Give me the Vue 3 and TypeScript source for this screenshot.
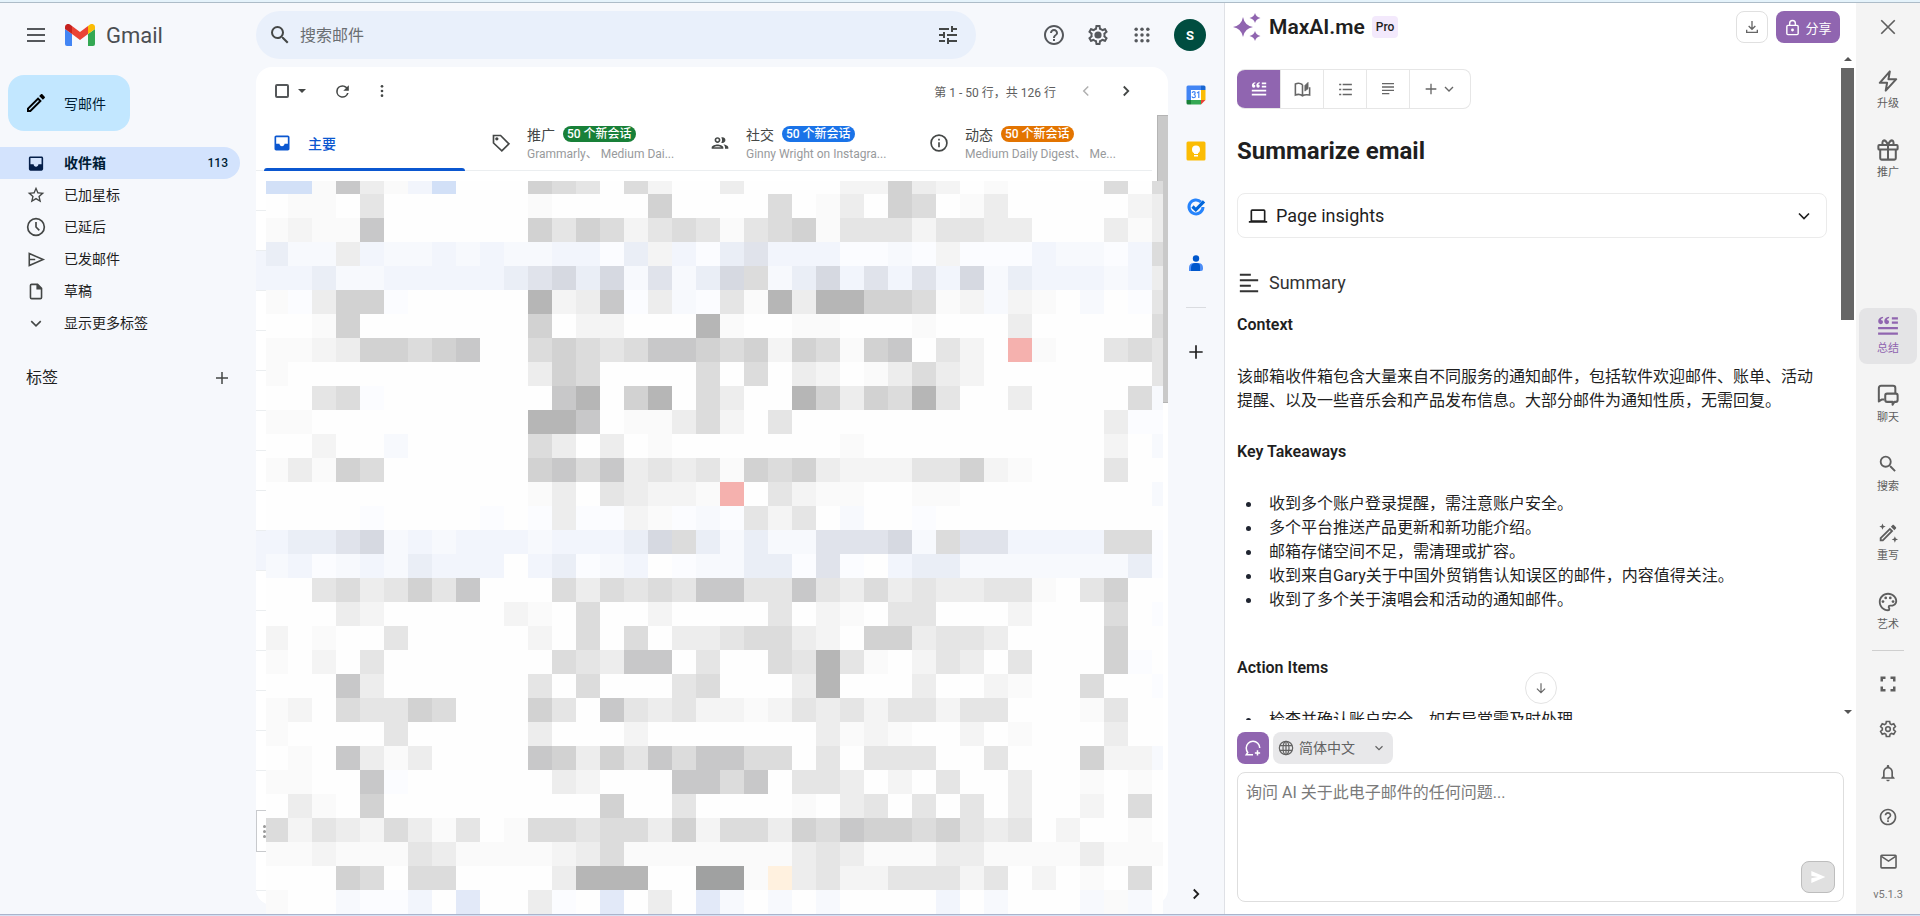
<script setup lang="ts">
import { h, ref } from 'vue'

interface Glyph {
  box?: string
  line?: number
  body: string
}

const glyphs: Record<string, Glyph> = {
  menu: { body: '<path d="M3 5h18v2H3zM3 11h18v2H3zM3 17h18v2H3z"/>' },
  search: { body: '<path d="M15.5 14h-.79l-.28-.27A6.471 6.471 0 0 0 16 9.5 6.5 6.5 0 1 0 9.5 16c1.61 0 3.09-.59 4.23-1.57l.27.28v.79l5 4.99L20.49 19l-4.99-5zm-6 0C7.01 14 5 11.99 5 9.5S7.01 5 9.5 5 14 7.01 14 9.5 11.99 14 9.5 14z"/>' },
  tune: { body: '<path d="M3 17v2h6v-2H3zM3 5v2h10V5H3zm10 16v-2h8v-2h-8v-2h-2v6h2zM7 9v2H3v2h4v2h2V9H7zm14 4v-2H11v2h10zm-6-4h2V7h4V5h-4V3h-2v6z"/>' },
  help: { body: '<path d="M11 18h2v-2h-2v2zm1-16C6.48 2 2 6.48 2 12s4.48 10 10 10 10-4.48 10-10S17.52 2 12 2zm0 18c-4.41 0-8-3.59-8-8s3.59-8 8-8 8 3.59 8 8-3.59 8-8 8zm0-14c-2.21 0-4 1.79-4 4h2c0-1.1.9-2 2-2s2 .9 2 2c0 2-3 1.75-3 5h2c0-2.25 3-2.5 3-5 0-2.21-1.79-4-4-4z"/>' },
  gear: { body: '<path d="M19.43 12.98c.04-.32.07-.64.07-.98 0-.34-.03-.66-.07-.98l2.11-1.65c.19-.15.24-.42.12-.64l-2-3.46c-.09-.16-.26-.25-.44-.25-.06 0-.12.01-.17.03l-2.49 1c-.52-.4-1.08-.73-1.69-.98l-.38-2.65C14.46 2.18 14.25 2 14 2h-4c-.25 0-.46.18-.49.42l-.38 2.65c-.61.25-1.17.59-1.69.98l-2.49-1c-.06-.02-.12-.03-.18-.03-.17 0-.34.09-.43.25l-2 3.46c-.13.22-.07.49.12.64l2.11 1.65c-.04.32-.07.65-.07.98 0 .33.03.66.07.98l-2.11 1.65c-.19.15-.24.42-.12.64l2 3.46c.09.16.26.25.44.25.06 0 .12-.01.17-.03l2.49-1c.52.4 1.08.73 1.69.98l.38 2.65c.03.24.24.42.49.42h4c.25 0 .46-.18.49-.42l.38-2.65c.61-.25 1.17-.59 1.69-.98l2.49 1c.06.02.12.03.18.03.17 0 .34-.09.43-.25l2-3.46c.12-.22.07-.49-.12-.64l-2.11-1.65zm-1.98-1.71c.04.31.05.52.05.73 0 .21-.02.43-.05.73l-.14 1.13.89.7 1.08.84-.7 1.21-1.27-.51-1.04-.42-.9.68c-.43.32-.84.56-1.25.73l-1.06.43-.16 1.13-.2 1.35h-1.4l-.19-1.35-.16-1.13-1.06-.43c-.43-.18-.83-.41-1.23-.71l-.91-.7-1.06.43-1.27.51-.7-1.21 1.08-.84.89-.7-.14-1.13c-.03-.31-.05-.54-.05-.74s.02-.43.05-.73l.14-1.13-.89-.7-1.08-.84.7-1.21 1.27.51 1.04.42.9-.68c.43-.32.84-.56 1.25-.73l1.06-.43.16-1.13.2-1.35h1.39l.19 1.35.16 1.13 1.06.43c.43.18.83.41 1.23.71l.91.7 1.06-.43 1.27-.51.7 1.21-1.07.85-.89.7.14 1.13z"/><circle cx="12" cy="12" r="3.6"/>' },
  gearOpen: { line: 1.9, body: '<path d="M10 3h4l.5 2.7 1.8 1 2.6-.9 2 3.4-2.1 1.8v2l2.1 1.8-2 3.4-2.6-.9-1.8 1L14 21h-4l-.5-2.7-1.8-1-2.6.9-2-3.4L5.200 13v-2L3.100 9.200l2-3.400 2.600.900 1.800-1z"/><circle cx="12" cy="12" r="2.800"/>' },
  apps: { body: '<circle cx="5" cy="5" r="2.100"/><circle cx="12" cy="5" r="2.100"/><circle cx="19" cy="5" r="2.100"/><circle cx="5" cy="12" r="2.100"/><circle cx="12" cy="12" r="2.100"/><circle cx="19" cy="12" r="2.100"/><circle cx="5" cy="19" r="2.100"/><circle cx="12" cy="19" r="2.100"/><circle cx="19" cy="19" r="2.100"/>' },
  pencil: { body: '<path d="M14.06 9.02l.92.92L5.92 19H5v-.92l9.06-9.06M17.66 3c-.25 0-.51.1-.7.29l-1.83 1.83 3.75 3.75 1.83-1.83c.39-.39.39-1.02 0-1.41l-2.34-2.34c-.2-.2-.45-.29-.71-.29zm-3.6 3.19L3 17.25V21h3.75L17.81 9.94l-3.75-3.75z"/>' },
  inbox: { body: '<path d="M19 3H5c-1.1 0-2 .9-2 2v14c0 1.1.9 2 2 2h14c1.1 0 2-.9 2-2V5c0-1.1-.9-2-2-2zm0 10h-4c0 1.66-1.34 3-3 3s-3-1.34-3-3H5V5h14v8z"/>' },
  star: { body: '<path d="M22 9.24l-7.19-.62L12 2 9.19 8.63 2 9.24l5.46 4.73L5.82 21 12 17.27 18.18 21l-1.63-7.03L22 9.24zM12 15.4l-3.76 2.27 1-4.28-3.32-2.88 4.38-.38L12 6.1l1.71 4.04 4.38.38-3.32 2.88 1 4.28L12 15.4z"/>' },
  clock: { line: 2, body: '<circle cx="12" cy="12" r="10"/><path d="M12 6v6l4 4"/>' },
  send: { line: 2, body: '<path d="M3.500 4.500 21 12 3.500 19.500zM3.500 12H11"/>' },
  file: { line: 2, body: '<path d="M14 3H6.500Q5 3 5 4.500v15Q5 21 6.500 21h11q1.500 0 1.500-1.500V8z"/><path d="M13.500 3v5.500H19" fill="currentColor"/>' },
  down: { line: 2, body: '<path d="m6 9 6 6 6-6"/>' },
  left: { line: 2, body: '<path d="m15 6-6 6 6 6"/>' },
  right: { line: 2.4, body: '<path d="m9 6 6 6-6 6"/>' },
  plus: { line: 2, body: '<path d="M12 4v16M4 12h16"/>' },
  caret: { body: '<path d="m6 9 6 6 6-6z"/>' },
  refresh: { body: '<path d="M17.65 6.35A7.958 7.958 0 0 0 12 4a8 8 0 1 0 7.73 10h-2.08A6 6 0 1 1 12 6c1.66 0 3.14.69 4.22 1.78L13 11h7V4l-2.35 2.35z"/>' },
  more: { body: '<circle cx="12" cy="5" r="2"/><circle cx="12" cy="12" r="2"/><circle cx="12" cy="19" r="2"/>' },
  tag: { line: 2, body: '<path d="M3 3h8.500l10 10-8.500 8.500L3 12z"/><circle cx="7" cy="7" r="1" fill="currentColor"/>' },
  people: { body: '<path d="M9 13.75c-2.34 0-7 1.17-7 3.5V19h14v-1.75c0-2.33-4.66-3.5-7-3.5zM4.34 17c.84-.58 2.87-1.25 4.66-1.25s3.82.67 4.66 1.25H4.34zM9 12c1.93 0 3.5-1.57 3.5-3.5S10.93 5 9 5 5.5 6.57 5.5 8.5 7.07 12 9 12zm0-5c.83 0 1.5.67 1.5 1.5S9.83 10 9 10s-1.5-.67-1.5-1.5S8.17 7 9 7zm7.04 6.81c1.16.84 1.96 1.96 1.96 3.44V19h4v-1.75c0-2.02-3.5-3.17-5.96-3.44zM15 12c1.93 0 3.5-1.57 3.5-3.5S16.93 5 15 5c-.54 0-1.04.13-1.5.35.63.89 1 1.98 1 3.15s-.37 2.26-1 3.15c.46.22.96.35 1.5.35z"/>' },
  info: { line: 2, body: '<circle cx="12" cy="12" r="9.500"/><path d="M12 11v6M12 7v2"/>' },
  gmail: { box: '0 0 30 22', body: '<path fill="#4285f4" d="M2 22h5V10L0 5v15q0 2 2 2z"/><path fill="#34a853" d="M23 22h5q2 0 2-2V5l-7 5z"/><path fill="#fbbc04" d="M23 2v8l7-5V3c0-2.500-2.900-4-5-2.500z"/><path fill="#ea4335" d="M7 10V2l8 6 8-6v8l-8 6z"/><path fill="#c5221f" d="M0 3v2l7 5V2L5 .5C2.900-1 0 .5 0 3z"/>' },
  calendar: { box: '0 0 20 20', body: '<path fill="#4285f4" d="M2 .5h13V5H5v10H.5V2Q.5.5 2 .5z"/><path fill="#1967d2" d="M15 .5h3q1.500 0 1.500 1.500v3H15z"/><path fill="#fbbc04" d="M15 5h4.500v10H15z"/><path fill="#34a853" d="M5 15h10v4.500H5z"/><path fill="#188038" d="M.5 15H5v4.500H2Q.5 19.500.5 18z"/><path fill="#ea4335" d="M15 15h4.500L15 19.500z"/><path fill="#fff" d="M5 5h10v10H5z"/><g fill="none" stroke="#4285f4" stroke-width="1.200"><path d="M6.200 8q.2-1.300 1.600-1.300Q9.200 6.700 9.200 8q0 1.300-1.500 1.500 1.700.2 1.700 1.700 0 1.500-1.700 1.500-1.500 0-1.700-1.400M11 8l1.800-1.200v6.300"/></g>' },
  keep: { box: '0 0 20 20', body: '<rect x=".5" y=".5" width="19" height="19" rx="1.500" fill="#fbbc04"/><circle cx="10" cy="8.500" r="4" fill="#fff"/><path fill="#fff" d="M8 11h4v2H8zM8 14h4v1.500H8z"/>' },
  tasks: { box: '0 0 20 20', body: '<g fill="none"><path d="M15 5A7 7 0 1 0 17 10" stroke="#2684fc" stroke-width="3"/><path d="m6.500 9.500 3.300 3.300L18 4.300" stroke="#0066da" stroke-width="3.200"/></g>' },
  contact: { box: '0 0 20 20', body: '<circle cx="10" cy="5.500" r="3.200" fill="#0057cc"/><path fill="#4c8df6" d="M3 18v-3q0-5 5-5h4q5 0 5 5v1q0 2-2 2z"/><path fill="#0057cc" d="M5 18v-3q0-5 5-5 4 0 4 3v5z"/>' },
  spark: { box: '0 0 28 28', body: '<path d="M10 4q1.500 8.500 10 10-8.500 1.500-10 10Q8.500 15.500 0 14q8.500-1.500 10-10zM22 0q1 4 5.500 5Q23 6 22 10q-1-4-5.500-5Q21 4 22 0zM22 18q1 4 5.500 5-4.500 1-5.500 5-1-4-5.500-5 4.500-1 5.500-5z"/>' },
  download: { line: 2, body: '<path d="M12 3v12M7 10.500l5 5 5-5M4 16v4h16v-4"/>' },
  lock: { line: 2, body: '<rect x="4" y="9" width="16" height="13" rx="1.500"/><path d="M8 9V6q0-4 4-4t4 4v3"/><circle cx="12" cy="15.500" r="1" fill="currentColor"/>' },
  quote: { box: '0 0 20 20', body: '<path d="M5.500 1.500v1.300Q3.600 3.200 3.500 4.500 5.500 4.600 5.500 6.400 5.400 8.300 3.500 8.300 1.100 8.200 1.100 5.500 1.200 2 5.500 1.500zM11 1.500v1.300Q9.100 3.200 9 4.500q2 .1 2 1.900Q10.900 8.300 9 8.300 6.600 8.200 6.600 5.500 6.700 2 11 1.500zM13.500 2H19v2h-5.500zM13.500 6H19v2h-5.500zM1 11h18v2H1zM1 16h18v2H1z"/>' },
  book: { line: 2, body: '<path d="M12 6q-4-3-9-1v14q5-2 9 1 3-2 9-1V9M12 6v14"/><path d="M15 14V7l4-4v8z" fill="currentColor" stroke-width="1"/>' },
  bullets: { body: '<path d="M3 4h3v2H3zM8 4h13v2H8zM3 11h3v2H3zM8 11h13v2H8zM3 18h3v2H3zM8 18h13v2H8z"/>' },
  lines: { body: '<path d="M3 3h18v2H3zM3 8h18v2H3zM3 13h18v2H3zM3 18h11v2H3z"/>' },
  summary: { body: '<path d="M2 2h12v2H2zM2 8h20v2H2zM2 14h12v2H2zM2 20h20v2H2z"/>' },
  laptop: { body: '<path d="M21 18V6q0-2-2-2H5Q3 4 3 6v12H1v2h22v-2zM5 6h14v11H5z"/>' },
  arrowDown: { line: 2, body: '<path d="M12 4v16M5 13l7 7 7-7"/>' },
  chatNew: { line: 2, body: '<path d="M12 21H3l2-3Q3 15.500 3 12a9 9 0 0 1 18 0M18 15v7M14.500 18.500h7"/>' },
  globe: { line: 1.8, body: '<circle cx="12" cy="12" r="10"/><ellipse cx="12" cy="12" rx="4.500" ry="10"/><path d="M3 8.500h18M3 15.500h18M12 2v20"/>' },
  sendFill: { body: '<path d="M2 21 23 12 2 3v7l10 2-10 2z"/>' },
  close: { line: 2.2, body: '<path d="m3 3 18 18M21 3 3 21"/>' },
  bolt: { line: 2.2, body: '<path d="M14 1.500 3 14h8l-1.500 8.500L21 10h-8.500z" stroke-linejoin="round"/>' },
  gift: { line: 2.2, body: '<rect x="1.500" y="6.500" width="21" height="5" rx="1"/><path d="M3.500 11.500V21q0 1.500 1.500 1.500h14q1.500 0 1.500-1.500v-9.500M12 6.500v16M12 6.500Q10 1.500 7.500 1.500q-2 .5-1.500 5M12 6.500q2-5 4.500-5 2 .5 1.500 5"/>' },
  chat: { line: 2.2, body: '<path d="M8 17H5l-3 2V4.500Q2 2 4.500 2h13Q20 2 20 4.500V10" stroke-linejoin="round"/><path d="M11 10.500h9.500q2 0 2 2v5q0 2-2 2H19l-2 3v-3h-6q-2 0-2-2v-5q0-2 2-2z" stroke-linejoin="round"/>' },
  wand: { body: '<path d="M14.060 9.020l.92.92L5.920 19H5v-.92l9.060-9.060M17.660 3c-.25 0-.51.1-.7.29l-1.830 1.830 3.750 3.750 1.830-1.830c.39-.39.39-1.020 0-1.410l-2.340-2.340c-.2-.2-.45-.29-.71-.29zm-3.600 3.190L3 17.250V21h3.750L17.810 9.940l-3.750-3.750zM6 1.500 7 4l2.500 1L7 6 6 8.500 5 6 2.500 5 5 4zM19.500 15.500l1 2.500 2.500 1-2.500 1-1 2.500-1-2.500-2.500-1 2.500-1z"/>' },
  palette: { body: '<path d="M12 22C6.490 22 2 17.510 2 12S6.490 2 12 2s10 4.040 10 9c0 3.310-2.690 6-6 6h-1.770c-.28 0-.5.22-.5.5 0 .12.05.23.13.33.41.47.64 1.060.64 1.670A2.500 2.500 0 0 1 12 22zm0-18c-4.410 0-8 3.590-8 8s3.590 8 8 8c.28 0 .5-.22.5-.5a.54.54 0 0 0-.14-.35c-.41-.46-.63-1.050-.63-1.650a2.500 2.500 0 0 1 2.500-2.500H16c2.210 0 4-1.790 4-4 0-3.860-3.590-7-8-7z"/><circle cx="6.500" cy="11.500" r="1.500"/><circle cx="9.500" cy="7.500" r="1.500"/><circle cx="14.500" cy="7.500" r="1.500"/><circle cx="17.500" cy="11.500" r="1.500"/>' },
  expand: { body: '<path d="M3 15h3v3h3v3H3zM3 3h6v3H6v3H3zM15 3h6v6h-3V6h-3zM18 15h3v6h-6v-3h3z"/>' },
  bell: { body: '<path d="M12 22c1.100 0 2-.9 2-2h-4c0 1.100.9 2 2 2zm6-6v-5c0-3.070-1.630-5.640-4.500-6.320V4c0-.83-.67-1.500-1.500-1.500s-1.500.67-1.500 1.500v.68C7.640 5.360 6 7.920 6 11v5l-2 2v1h16v-1l-2-2zm-2 1H8v-6c0-2.480 1.510-4.500 4-4.500s4 2.020 4 4.500v6z"/>' },
  mail: { line: 2, body: '<rect x="2.500" y="4" width="19" height="16" rx="1"/><path d="m3 5.500 9 6 9-6"/>' },
}

const Icon = (props: { name: string; size: number }) => {
  const g = glyphs[props.name]
  return h('svg', {
    viewBox: g.box ?? '0 0 24 24',
    height: props.size,
    width: props.name === 'gmail' ? 30 : props.size,
    fill: g.line ? 'none' : 'currentColor',
    stroke: g.line ? 'currentColor' : undefined,
    'stroke-width': g.line,
    'aria-hidden': 'true',
    innerHTML: g.body,
  })
}
Icon.props = ['name', 'size']

const folders = [
  { icon: 'inbox', label: '收件箱', count: '113' },
  { icon: 'star', label: '已加星标' },
  { icon: 'clock', label: '已延后' },
  { icon: 'send', label: '已发邮件' },
  { icon: 'file', label: '草稿' },
  { icon: 'down', label: '显示更多标签' },
]

const tabs = [
  { icon: 'inbox', label: '主要', tone: '', from: '' },
  { icon: 'tag', label: '推广', tone: 'green', from: 'Grammarly、 Medium Dai...' },
  { icon: 'people', label: '社交', tone: 'blue', from: 'Ginny Wright on Instagra...' },
  { icon: 'info', label: '动态', tone: 'orange', from: 'Medium Daily Digest、 Me...' },
]

const shade: Record<string, string> = {
  '.': '#fefefe', a: '#fafafa', b: '#f4f4f4', c: '#ededed', d: '#e5e5e5', e: '#dcdcdc',
  f: '#d2d2d2', g: '#c8c8c9', h: '#b6b6b6', i: '#a0a1a1', p: '#fbfcff', q: '#f7f9fd',
  r: '#f2f5fc', s: '#eaeef6', t: '#e0e3eb', u: '#d6d9e1', B: '#d2e0f7', C: '#e2e9f8',
  R: '#f5b1ae', Y: '#fff1df',
}

const mosaic = [
  'BBagcarB...fed.eb..c....bbfcb.a....e.e',
  '.aa.d......a....f....e.ac.fe.ac.....bc',
  'abaag......fdfebdedadefadddbddcc...cac',
  'sqqcrqqrqrqqrrpsbrpstrrrppqpbppprqqpre',
  'rrsqqrrrrrstusuqtqsueqsurtrtruqsrrrqrc',
  'apcffp.....hbcgpcqpdahchhffeabqba.q.pd',
  '..af.......f.bb...ha..aa...a...c.....e',
  'aabcffefg..efedeggfefbfeafg.db.Ra..ded',
  'a..........cfe....e.e.cb.acecb.......d',
  '..dep.......gh.fh.ec..hfcfehd..c....eq',
  'aa.........hhg.aaceb.d.............cpp',
  '..b..q.....ec.c.a.......a..........b.q',
  'acafe......fgegcdcdafefcbbbddfba...d..',
  '...........ac.dcbbaR.dbaa..aa........q',
  '....p....p.pcppbapqpdbd.q..p..........',
  'rsstuqrqrrrqrrrsuesqsqqtttuqettrrrreep',
  'qrpqrqsrrr.rspqr.pqqssptp.rssqqqqqqqsp',
  '..decdfdg...ecededggddgdcecdccdda.df..',
  '...cb.....ba.e..b....d.ba.dd...b...e.p',
  'b.a..d.....b.e.e.ccdeecb.ffcddc....f..',
  'a.b.d.......edcgg.d..edhda.bdc.d...fp.',
  '...gc......d.e...de...ch...c..ba..e..p',
  'ab.eddfe...fd.gdcdbbabdcdbddbdd...ad..',
  'a....d.....c...b.......caba..b.a...c..',
  '.a.gcac....gfcfdgeggee.d.ddd..d...fbbq',
  'aa..gp......cb...ggeg.ddc.b.d..c..a.a.',
  '.ca.f.........f..d....a.cd.d.d.c..b.e.',
  'ebdcbecad.aeedeecfbeecfegffefdcd.b..a.',
  'aabaaadcaaaabceaaaaaaacdcaaaccaaaacaaa',
  '...fe.ee....chhh..iiaYcdbbdddbd.b.a.e.',
  'a..qppr.C..cp.C.c.Cq.q.q....r.q...qaq.',
].map((row) => [...row].map((c) => shade[c]))

const takeaways = [
  '收到多个账户登录提醒，需注意账户安全。',
  '多个平台推送产品更新和新功能介绍。',
  '邮箱存储空间不足，需清理或扩容。',
  '收到来自Gary关于中国外贸销售认知误区的邮件，内容值得关注。',
  '收到了多个关于演唱会和活动的通知邮件。',
]

const promos = [
  { icon: 'bolt', label: '升级' },
  { icon: 'gift', label: '推广' },
]
const tools = [
  { icon: 'quote', label: '总结' },
  { icon: 'chat', label: '聊天' },
  { icon: 'search', label: '搜索' },
  { icon: 'wand', label: '重写' },
  { icon: 'palette', label: '艺术' },
]
const utilities = [
  { icon: 'expand', label: '全屏', size: 20 },
  { icon: 'gearOpen', label: '设置', size: 20 },
  { icon: 'bell', label: '通知', size: 20 },
  { icon: 'help', label: '帮助', size: 20 },
  { icon: 'mail', label: '联系我们', size: 19 },
]

const query = ref('')
const question = ref('')
const language = ref('zh')
</script>

<template>
  <div class="window">
    <div class="edge-top"></div>
    <div class="main">
      <section class="gmail">
        <header class="header">
          <div class="brand">
            <button class="plain round" aria-label="主菜单"><Icon name="menu" :size="24" /></button>
            <a href="#" class="logo"><Icon name="gmail" :size="22" /><span>Gmail</span></a>
          </div>
          <form class="search" @submit.prevent>
            <button class="plain round" aria-label="搜索"><Icon name="search" :size="24" /></button>
            <input v-model="query" type="text" placeholder="搜索邮件" aria-label="搜索邮件" />
            <button type="button" class="plain round" aria-label="搜索选项"><Icon name="tune" :size="24" /></button>
          </form>
          <div class="account">
            <button class="plain round" aria-label="支持"><Icon name="help" :size="24" /></button>
            <button class="plain round" aria-label="设置"><Icon name="gear" :size="24" /></button>
            <button class="plain round" aria-label="应用"><Icon name="apps" :size="20" /></button>
            <button class="plain avatar" aria-label="账号">S</button>
          </div>
        </header>

        <div class="columns">
          <aside class="side">
            <button class="plain compose"><Icon name="pencil" :size="24" />写邮件</button>
            <nav class="folders">
              <a v-for="(f, i) in folders" :key="f.label" href="#" class="folder" :class="{ current: i === 0 }">
                <Icon :name="f.icon" :size="i === 0 || i > 2 ? 19 : 20" />
                <span class="folder-name">{{ f.label }}</span>
                <span v-if="f.count" class="count">{{ f.count }}</span>
              </a>
            </nav>
            <div class="labels">
              <h2>标签</h2>
              <button class="plain" aria-label="创建新标签"><Icon name="plus" :size="18" /></button>
            </div>
          </aside>

          <main class="card">
            <div class="toolbar">
              <input type="checkbox" class="check" aria-label="全选" />
              <button class="plain caret" aria-label="选择"><Icon name="caret" :size="16" /></button>
              <button class="plain round refresh" aria-label="刷新"><Icon name="refresh" :size="19" /></button>
              <button class="plain round" aria-label="更多"><Icon name="more" :size="16" /></button>
              <span class="range">第 1 - 50 行，共 126 行</span>
              <button class="plain round faded" aria-label="上一页"><Icon name="left" :size="18" /></button>
              <button class="plain round" aria-label="下一页"><Icon name="right" :size="18" /></button>
            </div>
            <div class="tabs">
              <button v-for="(t, i) in tabs" :key="t.label" class="plain tab" :class="{ chosen: i === 0 }">
                <Icon :name="t.icon" :size="20" />
                <span class="tab-text">
                  <span class="tab-title">{{ t.label }}<b v-if="t.tone" class="badge" :class="t.tone">50 个新会话</b></span>
                  <span v-if="t.from" class="from">{{ t.from }}</span>
                </span>
              </button>
            </div>
            <div class="list">
              <div class="rows">
                <div v-for="n in 18" :key="n" class="row" :class="{ read: n === 3 || n === 10 }"></div>
              </div>
              <div class="toggle"><i v-for="n in 3" :key="n"></i></div>
              <div class="mosaic">
                <template v-for="(cells, r) in mosaic" :key="r">
                  <div v-for="(c, k) in cells" :key="k" :style="{ background: c }"></div>
                </template>
              </div>
            </div>
            <div class="thumb"></div>
          </main>

          <aside class="addons">
            <button class="plain" aria-label="日历"><Icon name="calendar" :size="20" /></button>
            <button class="plain" aria-label="Keep"><Icon name="keep" :size="20" /></button>
            <button class="plain" aria-label="Tasks"><Icon name="tasks" :size="20" /></button>
            <button class="plain" aria-label="通讯录"><Icon name="contact" :size="20" /></button>
            <hr />
            <button class="plain" aria-label="获取插件"><Icon name="plus" :size="20" /></button>
            <button class="plain hide" aria-label="隐藏侧边栏"><Icon name="right" :size="18" /></button>
          </aside>
        </div>
      </section>

      <section class="panel">
        <header class="panel-head">
          <Icon class="spark" name="spark" :size="28" />
          <strong>MaxAI.me</strong>
          <span class="pro">Pro</span>
          <button class="plain export" aria-label="下载"><Icon name="download" :size="16" /></button>
          <button class="plain share"><Icon name="lock" :size="17" />分享</button>
        </header>

        <div class="panel-body">
          <article class="content">
            <div class="modes">
              <button class="plain on" aria-label="总结"><Icon name="quote" :size="16" /></button>
              <button class="plain" aria-label="阅读"><Icon name="book" :size="19" /></button>
              <button class="plain" aria-label="要点"><Icon name="bullets" :size="17" /></button>
              <button class="plain" aria-label="全文"><Icon name="lines" :size="16" /></button>
              <button class="plain wide" aria-label="添加"><Icon name="plus" :size="16" /><Icon name="down" :size="16" /></button>
            </div>
            <h1>Summarize email</h1>
            <button class="plain insights"><Icon name="laptop" :size="20" /><span>Page insights</span><Icon name="down" :size="20" /></button>
            <h2><Icon name="summary" :size="22" />Summary</h2>
            <h3>Context</h3>
            <p>该邮箱收件箱包含大量来自不同服务的通知邮件，包括软件欢迎邮件、账单、活动提醒、以及一些音乐会和产品发布信息。大部分邮件为通知性质，无需回复。</p>
            <h3>Key Takeaways</h3>
            <ul>
              <li v-for="t in takeaways" :key="t">{{ t }}</li>
            </ul>
            <h3 class="spaced">Action Items</h3>
            <ul>
              <li>检查并确认账户安全，如有异常需及时处理。</li>
            </ul>
          </article>
          <div class="scroll">
            <Icon class="flip" name="caret" :size="16" />
            <div class="scroll-thumb"></div>
            <Icon name="caret" :size="16" />
          </div>
          <button class="plain jump" aria-label="滚动到底部"><Icon name="arrowDown" :size="14" /></button>
        </div>

        <footer class="ask">
          <div class="ask-row">
            <button class="plain new-chat" aria-label="新对话"><Icon name="chatNew" :size="18" /></button>
            <label class="lang">
              <Icon name="globe" :size="16" />
              <select v-model="language" aria-label="语言"><option value="zh">简体中文</option></select>
              <Icon name="down" :size="14" />
            </label>
          </div>
          <div class="box">
            <textarea v-model="question" placeholder="询问 AI 关于此电子邮件的任何问题..." aria-label="提问"></textarea>
            <button class="plain submit" aria-label="发送"><Icon name="sendFill" :size="16" /></button>
          </div>
        </footer>
      </section>

      <aside class="rail">
        <button class="plain shut" aria-label="关闭"><Icon name="close" :size="18" /></button>
        <div class="group">
          <button v-for="p in promos" :key="p.label" class="plain tool"><Icon :name="p.icon" :size="22" />{{ p.label }}</button>
        </div>
        <div class="group low">
          <button v-for="(t, i) in tools" :key="t.label" class="plain tool" :class="{ active: i === 0 }">
            <Icon :name="t.icon" :size="22" />{{ t.label }}
          </button>
        </div>
        <hr />
        <button v-for="u in utilities" :key="u.label" class="plain util" :aria-label="u.label"><Icon :name="u.icon" :size="u.size" /></button>
        <span class="version">v5.1.3</span>
      </aside>
    </div>
    <div class="edge-bottom"></div>
  </div>
</template>

<style>
body {
  margin: 0;
}
</style>

<style scoped>
.window,
.window * {
  box-sizing: border-box;
}
.window {
  display: flex;
  flex-direction: column;
  height: 100vh;
  overflow: hidden;
  font-family: Roboto, "Noto Sans CJK SC", sans-serif;
  font-size: 14px;
  color: #1f1f1f;
  background: #f6f8fc;
}
.edge-top {
  flex: none;
  height: 3px;
  background: #e5f3fb;
  border-bottom: 1px solid #adbcc8;
}
.edge-bottom {
  flex: none;
  height: 2px;
  background: #d3e0f3;
  border-top: 1px solid #aab4cc;
}
.main {
  flex: 1;
  min-height: 0;
  display: flex;
}
.plain {
  display: flex;
  align-items: center;
  justify-content: center;
  margin: 0;
  padding: 0;
  border: 0;
  background: none;
  color: inherit;
  font: inherit;
}
.window svg {
  flex: none;
  display: block;
}
.round {
  width: 40px;
  height: 40px;
}

.gmail {
  flex: 1;
  min-width: 0;
  display: flex;
  flex-direction: column;
}
.header {
  flex: none;
  display: flex;
  align-items: center;
  height: 64px;
  padding-right: 18px;
  color: #55585c;
}
.brand {
  display: flex;
  align-items: center;
  flex: none;
  width: 256px;
  padding-left: 16px;
  gap: 9px;
}
.logo {
  display: flex;
  align-items: center;
  gap: 11px;
  font-size: 22px;
  color: #4b4e52;
  text-decoration: none;
}
.search {
  flex: 1;
  max-width: 720px;
  height: 48px;
  display: flex;
  align-items: center;
  padding: 0 8px 0 4px;
  border-radius: 24px;
  background: #e9f0fb;
  color: #444746;
}
.search input {
  flex: 1;
  min-width: 0;
  border: 0;
  padding: 0;
  outline: 0;
  background: none;
  font: inherit;
  font-size: 16px;
}
.search input::placeholder {
  color: #6a6e72;
}
.account {
  display: flex;
  align-items: center;
  gap: 4px;
  margin-left: auto;
}
.avatar {
  width: 32px;
  height: 32px;
  margin-left: 8px;
  border-radius: 50%;
  background: #004d40;
  color: #fff;
  font-size: 13px;
  font-weight: 700;
}
.columns {
  flex: 1;
  min-height: 0;
  display: flex;
}
.side {
  flex: none;
  width: 256px;
  padding-top: 8px;
}
.compose {
  width: 122px;
  height: 56px;
  margin-left: 8px;
  padding-left: 16px;
  justify-content: flex-start;
  gap: 16px;
  border-radius: 16px;
  background: #c2e7ff;
  color: #001d35;
}
.compose svg {
  color: #000;
}
.folders {
  margin-top: 16px;
  width: 240px;
}
.folder {
  display: flex;
  align-items: center;
  height: 32px;
  padding: 0 12px 0 26px;
  border-radius: 0 16px 16px 0;
  color: #1f1f1f;
  line-height: 20px;
  text-decoration: none;
}
.folder svg {
  width: 20px;
  color: #444746;
}
.folder-name {
  flex: 1;
  margin-left: 18px;
}
.current {
  background: #d3e3fd;
  color: #001d35;
  font-weight: 700;
}
.current svg {
  color: #041e49;
}
.count {
  font-size: 12px;
  font-weight: 500;
}
.labels {
  display: flex;
  align-items: center;
  justify-content: space-between;
  height: 40px;
  margin-top: 19px;
  padding: 0 25px 0 26px;
}
.labels h2 {
  margin: 0;
  font-size: 16px;
  line-height: 24px;
  font-weight: 400;
}
.labels button {
  color: #444746;
}

.card {
  position: relative;
  flex: 1;
  min-width: 0;
  display: flex;
  flex-direction: column;
  margin-bottom: 9px;
  border-radius: 16px;
  background: #fff;
}
.toolbar {
  flex: none;
  display: flex;
  align-items: center;
  height: 48px;
  padding: 0 22px 0 19px;
  color: #444746;
}
.check {
  appearance: none;
  width: 14px;
  height: 14px;
  margin: 0;
  border: 2px solid #55585a;
  border-radius: 2px;
}
.caret {
  width: 20px;
  height: 20px;
  margin: 0 12px 0 3px;
}
.refresh {
  margin-left: -2px;
}
.range {
  margin: 0 10px 0 auto;
  font-size: 12px;
  color: #5e5e5e;
}
.faded {
  color: #b0b0b0;
}
.tabs {
  flex: none;
  display: flex;
  height: 56px;
  margin-right: 16px;
  border-bottom: 1px solid #ebeef0;
}
.tab {
  position: relative;
  flex: none;
  width: 219px;
  padding: 0 0 0 16px;
  gap: 16px;
  justify-content: flex-start;
  text-align: left;
  color: #444746;
}
.tab-text {
  display: flex;
  flex-direction: column;
}
.tab-text:has(.from) {
  padding-top: 3px;
}
.tab-title {
  display: flex;
  align-items: center;
  gap: 8px;
  height: 20px;
  white-space: nowrap;
}
.from {
  height: 20px;
  line-height: 20px;
  white-space: nowrap;
  font-size: 12px;
  color: #989a9c;
}
.chosen {
  color: #0b57d0;
  font-weight: 500;
}
.chosen::after {
  content: "";
  position: absolute;
  left: 8px;
  right: 10px;
  bottom: -1px;
  height: 3px;
  border-radius: 3px 3px 0 0;
  background: #0b57d0;
}
.badge {
  height: 16px;
  padding: 0 4px;
  border-radius: 8px;
  font-size: 12px;
  line-height: 16px;
  font-weight: 500;
  color: #fff;
}
.green {
  background: #188038;
}
.blue {
  background: #1a73e8;
}
.orange {
  background: #e37400;
}
.list {
  position: relative;
  flex: 1;
  min-height: 0;
}
.rows {
  height: 100%;
  margin-right: 16px;
  overflow: hidden;
}
.row {
  height: 40px;
  border-bottom: 1px solid #ebeef0;
}
.read {
  background: #f2f5fc;
}
.toggle {
  position: absolute;
  left: 0;
  top: 639px;
  width: 16px;
  height: 42px;
  display: flex;
  flex-direction: column;
  align-items: center;
  justify-content: center;
  gap: 2px;
  border: 1px solid #c8cacd;
  background: #fff;
}
.toggle i {
  width: 3px;
  height: 3px;
  border-radius: 50%;
  background: #999;
}
.mosaic {
  position: absolute;
  z-index: 2;
  left: 10px;
  right: 5px;
  top: 10px;
  display: grid;
  grid-template-columns: 22fr repeat(36, 24fr) 11fr;
  grid-template-rows: 13px repeat(30, 24px);
}
.thumb {
  position: absolute;
  right: 0;
  top: 48px;
  width: 11px;
  height: 288px;
  border: 1px solid #b4b4b4;
  border-right: 0;
  background: #c9c9c9;
}
.addons {
  flex: none;
  width: 56px;
  display: flex;
  flex-direction: column;
  align-items: center;
}
.addons button {
  width: 56px;
  height: 56px;
}
.addons hr {
  width: 20px;
  height: 1px;
  margin: 16px 0;
  border: 0;
  background: #dadce0;
}
.addons .hide {
  height: 40px;
  margin-top: auto;
}

.panel {
  flex: none;
  width: 632px;
  display: flex;
  flex-direction: column;
  border-left: 1px solid #dfe1e6;
  background: #fff;
}
.panel-head {
  flex: none;
  display: flex;
  align-items: center;
  height: 48px;
  padding: 0 16px 0 8px;
}
.spark {
  color: #9065b0;
}
.panel-head strong {
  margin-left: 8px;
  font-size: 21px;
  font-weight: 600;
}
.pro {
  margin-left: 7px;
  padding: 0 4px;
  border-radius: 4px;
  background: #f3e9fc;
  font-size: 12px;
  font-weight: 500;
  line-height: 22px;
}
.export {
  width: 32px;
  height: 32px;
  margin-left: auto;
  border: 1px solid #e0e0e0;
  border-radius: 8px;
  color: #666;
}
.share {
  width: 64px;
  height: 32px;
  margin-left: 8px;
  gap: 4px;
  border-radius: 8px;
  background: #9065b0;
  color: #fff;
  font-size: 13px;
}
.panel-body {
  position: relative;
  flex: 1;
  min-height: 0;
  display: flex;
}
.content {
  flex: 1;
  min-width: 0;
  overflow: hidden;
  padding: 18px 12px 0 12px;
  font-size: 16px;
  line-height: 24px;
}
.modes {
  display: flex;
  width: max-content;
  height: 40px;
  overflow: hidden;
  border: 1px solid #e6e6e6;
  border-left: 0;
  border-radius: 8px;
  color: #666;
}
.modes button {
  width: 43px;
}
.modes button + button {
  border-left: 1px solid #e6e6e6;
}
.modes .wide {
  width: 61px;
  gap: 2px;
}
.modes .on {
  background: #9065b0;
  color: #fff;
}
.content h1 {
  margin: 26px 0;
  font-size: 24px;
  line-height: 32px;
  font-weight: 700;
}
.insights {
  width: 100%;
  height: 45px;
  padding: 0 12px 0 10px;
  gap: 8px;
  border: 1px solid #ebebeb;
  border-radius: 8px;
  font-size: 18px;
  line-height: 24px;
}
.insights span {
  flex: 1;
  text-align: left;
}
.content h2 {
  display: flex;
  align-items: center;
  gap: 9px;
  margin: 33px 0 18px;
  padding-left: 1px;
  font-size: 18px;
  font-weight: 400;
  color: #333;
}
.content h3 {
  margin: 0 0 28px;
  font-size: 16px;
  font-weight: 600;
}
.content p {
  margin: 0 0 27px;
}
.content ul {
  margin: 0;
  padding: 0;
  list-style: none;
}
.content li {
  display: flex;
  align-items: center;
}
.content li::before {
  content: "";
  width: 5px;
  height: 5px;
  margin: 0 18px 0 9px;
  border-radius: 50%;
  background: #1f2430;
}
.content .spaced {
  margin-top: 44px;
}
.scroll {
  flex: none;
  width: 17px;
  display: flex;
  flex-direction: column;
  align-items: center;
  color: #555;
}
.flip {
  transform: rotate(180deg);
}
.scroll-thumb {
  width: 13px;
  height: 252px;
  margin: 1px 0 auto;
  background: #666;
}
.jump {
  position: absolute;
  left: 50%;
  bottom: 16px;
  width: 32px;
  height: 32px;
  margin-left: -16px;
  border: 1px solid #e4e4e4;
  border-radius: 50%;
  background: #fff;
  color: #666;
}
.ask {
  flex: none;
  padding: 12px;
}
.ask-row {
  display: flex;
  gap: 4px;
  margin-bottom: 8px;
}
.new-chat {
  width: 32px;
  height: 32px;
  border-radius: 8px;
  background: #9065b0;
  color: #fff;
}
.lang {
  display: flex;
  align-items: center;
  width: 120px;
  height: 32px;
  padding: 0 7px 0 5px;
  border-radius: 8px;
  background: #e8e8ea;
  color: #626262;
}
.lang select {
  appearance: none;
  flex: 1;
  min-width: 0;
  margin-left: 5px;
  padding: 0;
  border: 0;
  background: none;
  color: inherit;
  font: inherit;
}
.box {
  display: flex;
  align-items: flex-end;
  height: 130px;
  padding: 8px;
  border: 1px solid #dedede;
  border-radius: 8px;
}
.box textarea {
  flex: 1;
  min-width: 0;
  height: 100%;
  padding: 0;
  border: 0;
  outline: 0;
  resize: none;
  background: none;
  font: inherit;
  font-size: 16px;
  line-height: 24px;
}
.box textarea::placeholder {
  color: #7a7a7a;
}
.submit {
  width: 34px;
  height: 32px;
  border: 1px solid #bdbdbd;
  border-radius: 8px;
  background: #e0e0e0;
  color: #fff;
}

.rail {
  flex: none;
  width: 64px;
  display: flex;
  flex-direction: column;
  align-items: center;
  padding-bottom: 11px;
  background: #f4f4f4;
  color: #5e5e5e;
}
.shut {
  width: 48px;
  height: 48px;
  margin-bottom: 12px;
}
.group {
  display: flex;
  flex-direction: column;
  gap: 13px;
}
.low {
  margin-top: auto;
}
.tool {
  flex-direction: column;
  gap: 4px;
  width: 58px;
  height: 56px;
  border-radius: 8px;
  font-size: 11px;
  line-height: 16px;
}
.active {
  background: #e4e4e6;
  color: #9065b0;
}
.rail hr {
  width: 32px;
  height: 1px;
  margin: 10px 0;
  border: 0;
  background: #cfcfcf;
}
.util {
  width: 44px;
  height: 44px;
}
.rail hr + .util {
  height: 46px;
}
.version {
  margin-top: 4px;
  font-size: 11px;
  line-height: 16px;
  color: #777;
}
</style>
